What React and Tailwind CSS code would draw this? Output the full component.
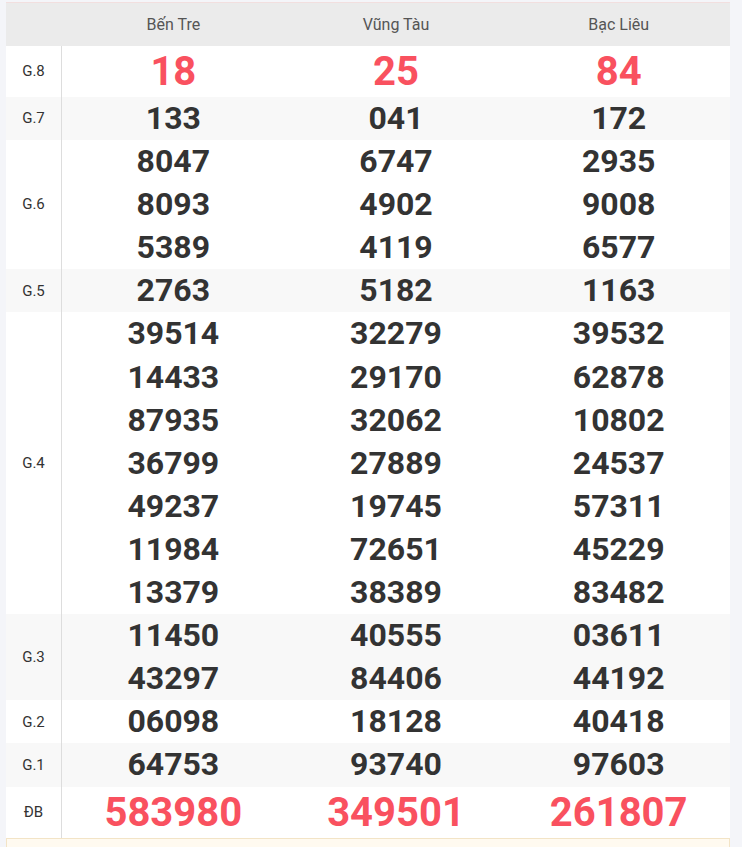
const provinces = ['Bến Tre', 'Vũng Tàu', 'Bạc Liêu'];

const rows = [
  { label: 'G.8', big: true, values: [['18'], ['25'], ['84']] },
  { label: 'G.7', values: [['133'], ['041'], ['172']] },
  { label: 'G.6', values: [['8047', '8093', '5389'], ['6747', '4902', '4119'], ['2935', '9008', '6577']] },
  { label: 'G.5', values: [['2763'], ['5182'], ['1163']] },
  {
    label: 'G.4',
    values: [
      ['39514', '14433', '87935', '36799', '49237', '11984', '13379'],
      ['32279', '29170', '32062', '27889', '19745', '72651', '38389'],
      ['39532', '62878', '10802', '24537', '57311', '45229', '83482'],
    ],
  },
  { label: 'G.3', values: [['11450', '43297'], ['40555', '84406'], ['03611', '44192']] },
  { label: 'G.2', values: [['06098'], ['18128'], ['40418']] },
  { label: 'G.1', values: [['64753'], ['93740'], ['97603']] },
  { label: 'ĐB', big: true, values: [['583980'], ['349501'], ['261807']] },
];

export default function App() {
  return (
    <div className="min-h-screen bg-[#f4f5f9] flex" style={{ fontFamily: 'Roboto, "Liberation Sans", sans-serif' }}>
      <div className="ml-[6px] mt-[2px] w-[724px]">
        {/* Header */}
        <div className="grid grid-cols-[56px_1fr_1fr_1fr] h-[44px] bg-[#ebebeb] border-t border-[#f2dfdf]">
          <div />
          {provinces.map((p) => (
            <div key={p} className="flex items-center justify-center text-[16px] text-[#555]">
              {p}
            </div>
          ))}
        </div>

        {/* Rows */}
        {rows.map((r, i) => (
          <div
            key={r.label}
            className={`grid grid-cols-[56px_1fr_1fr_1fr] ${i % 2 === 1 ? 'bg-[#f8f8f8]' : 'bg-white'}`}
          >
            <div className="flex items-center justify-center text-[15px] text-[#333] border-r border-[#dddddd]">
              {r.label}
            </div>
            {r.values.map((col, j) => (
              <div key={j} className="flex flex-col items-center">
                {col.map((n) => (
                  <div
                    key={n}
                    className={
                      r.big
                        ? 'h-[51px] leading-[51px] text-[40px] font-bold text-[#f9515f]'
                        : 'h-[43.1px] leading-[43px] text-[32px] font-bold text-[#333]'
                    }
                  >
                    {n}
                  </div>
                ))}
              </div>
            ))}
          </div>
        ))}

        <div className="h-[20px] bg-[#fffaf0] border border-[#f3e4c6]" />
      </div>
      <div className="ml-auto w-[2px] bg-white" />
    </div>
  );
}
